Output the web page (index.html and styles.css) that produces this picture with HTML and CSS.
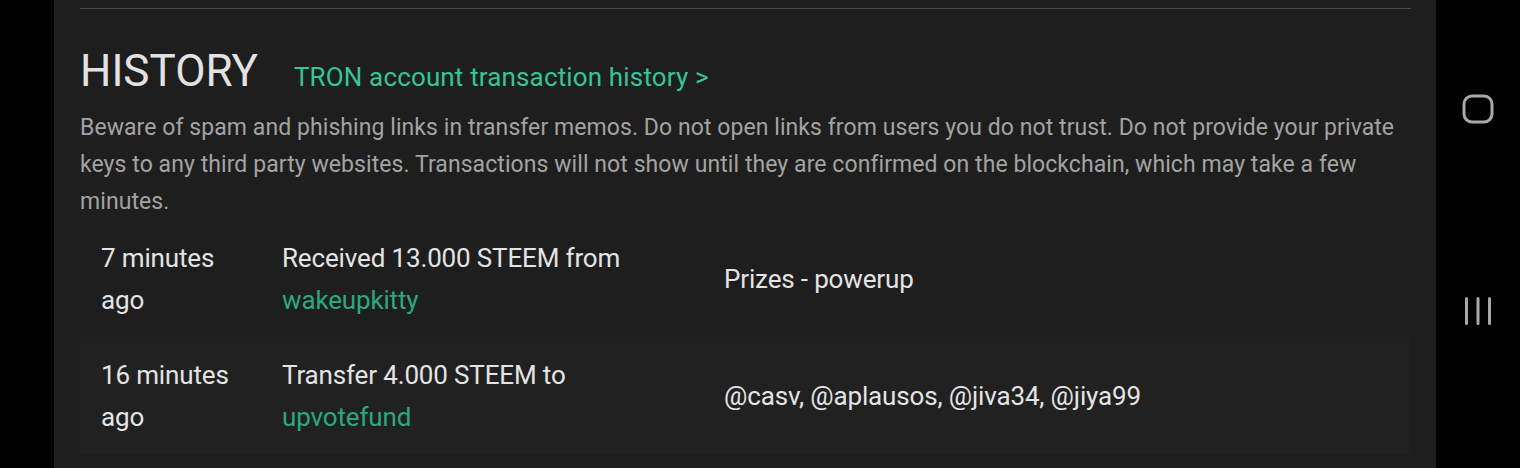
FILE: index.html
```html
<!DOCTYPE html>
<html lang="en">
<head>
  <meta charset="UTF-8" />
  <title>Wallet history</title>
  <link rel="stylesheet" href="styles.css">
</head>
<body>
  <div class="screen">
    <div class="panel">
      <hr class="rule">

      <div class="history-head">
        <h2>HISTORY</h2>
        <a class="tron-link" href="#">TRON account transaction history &gt;</a>
      </div>

      <p class="warning">Beware of spam and phishing links in transfer memos. Do not open links from users you do not trust. Do not provide your private keys to any third party websites. Transactions will not show until they are confirmed on the blockchain, which may take a few minutes.</p>

      <table class="history">
        <tr>
          <td class="when">7 minutes ago</td>
          <td class="what">Received 13.000 STEEM from <a href="#">wakeupkitty</a></td>
          <td class="memo">Prizes - powerup</td>
        </tr>
        <tr class="alt">
          <td class="when">16 minutes ago</td>
          <td class="what">Transfer 4.000 STEEM to <a href="#">upvotefund</a></td>
          <td class="memo">@casv, @aplausos, @jiva34, @jiya99</td>
        </tr>
      </table>
    </div>

    <div class="navbar">
      <svg class="nav-home" width="32" height="30" viewBox="0 0 32 30">
        <rect x="2" y="2" width="28" height="26" rx="8" ry="8" fill="none" stroke="#a8a8a8" stroke-width="3"/>
      </svg>
      <svg class="nav-recent" width="30" height="30" viewBox="0 0 30 30">
        <rect x="2" y="1" width="3" height="28" rx="1.5" fill="#a8a8a8"/>
        <rect x="13.5" y="1" width="3" height="28" rx="1.5" fill="#a8a8a8"/>
        <rect x="25" y="1" width="3" height="28" rx="1.5" fill="#a8a8a8"/>
      </svg>
    </div>
  </div>
</body>
</html>
```

FILE: styles.css
```css
html, body {
  margin: 0;
  padding: 0;
  height: 100%;
  background: #000;
  font-family: Roboto, "Noto Sans", sans-serif;
  overflow: hidden;
}

.screen {
  display: flex;
  height: 468px;
  padding-left: 54px;
}

.panel {
  width: 1382px;
  background: #1e1e1e;
  padding: 0 25px 0 26px;
  box-sizing: border-box;
}

.rule {
  margin: 8px 0 0 0;
  border: 0;
  border-top: 1px solid #4a4a4a;
}

.history-head {
  display: flex;
  align-items: baseline;
  gap: 36px;
  margin-top: 32px;
  height: 60px;
}

.history-head h2 {
  margin: 0;
  font-size: 44px;
  font-weight: 400;
  color: #e2e2e2;
  line-height: 60px;
}

.tron-link {
  color: #35c598;
  font-size: 26px;
  letter-spacing: 0.15px;
  text-decoration: none;
}

.warning {
  margin: 8px 0 0 0;
  font-size: 23px;
  letter-spacing: 0.07px;
  line-height: 37px;
  color: #a3a3a3;
}

.history {
  width: 100%;
  border-collapse: collapse;
  margin-top: 0;
}

.history td {
  vertical-align: middle;
  padding: 0;
  font-size: 26px;
  letter-spacing: -0.15px;
  line-height: 42px;
  color: #e4e4e4;
}

.history tr {
  height: 117px;
}

.history tr.alt {
  background: #212121;
}

.history .when {
  width: 160px;
  padding: 0 21px;
}

.history .what {
  width: 442px;
}

.history .what a {
  display: block;
  color: #2aa97e;
  text-decoration: none;
}

.navbar {
  flex: 1;
  display: flex;
  flex-direction: column;
  align-items: center;
  padding-top: 94px;
  gap: 172px;
}
```
